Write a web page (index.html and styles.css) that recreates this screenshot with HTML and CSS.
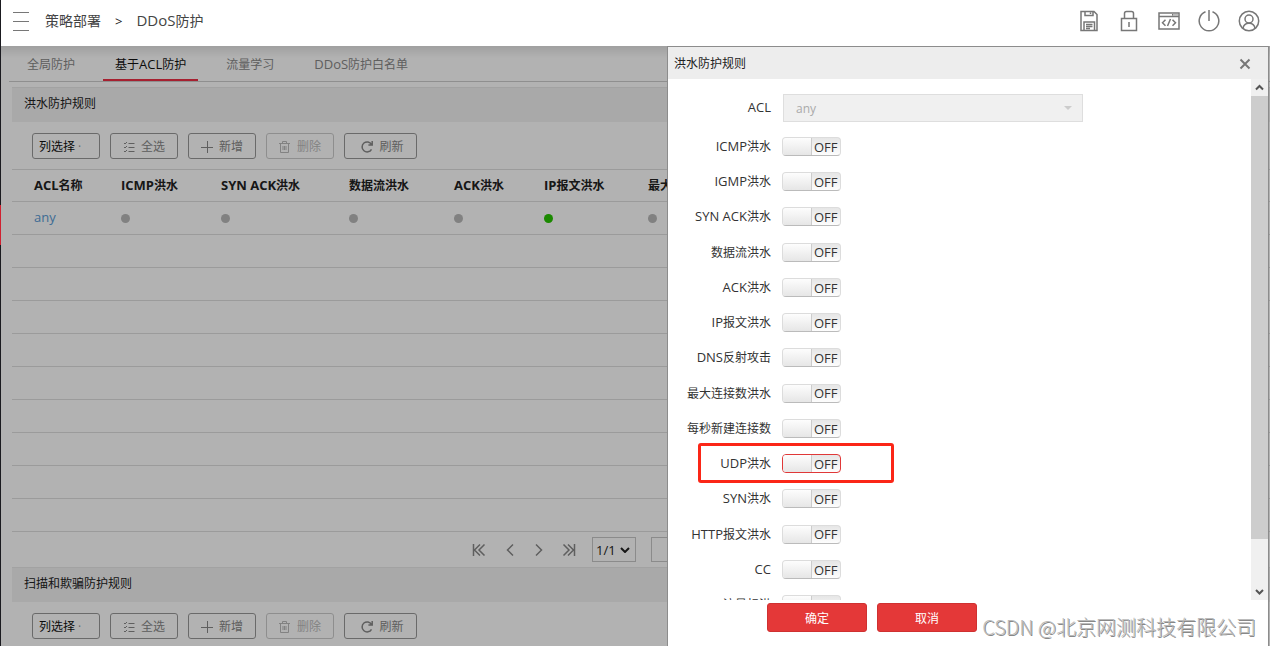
FILE: index.html
```html
<!DOCTYPE html>
<html lang="zh-CN">
<head>
<meta charset="utf-8">
<title>DDoS防护</title>
<link rel="stylesheet" href="styles.css">
</head>
<body>
<svg class="sprite" aria-hidden="true">
  <symbol id="i-list" viewBox="0 0 12 12"><path d="M1 2l1 1 2-2M1 6l1 1 2-2M1 10l1 1 2-2M5.500 2.500h6M5.500 6.500h6M5.500 10.500h6"/></symbol>
  <symbol id="i-plus" viewBox="0 0 12 12"><path d="M6.500 0v12M0 6.500h12"/></symbol>
  <symbol id="i-trash" viewBox="0 0 12 12"><path d="M0 2.500h11M3.500 2.500v-2h4v2M1.500 2.500v9h8v-9M4 5v4M5.500 5v4M7 5v4"/></symbol>
  <symbol id="i-refresh" viewBox="0 0 12 12"><path d="M10.500 8.300A5 5 0 1 1 10.500 3.500M11.200 0v4H7.400" stroke-width="1.500"/></symbol>
</svg>
<div class="app">
  <aside class="rail"><span class="rail-active"></span></aside>
  <div class="page">
    <header class="topbar">
      <button class="menu" aria-label="菜单"><span></span><span></span><span></span></button>
      <nav class="crumbs"><a href="#">策略部署</a><span class="sep">&gt;</span><a href="#"><span class="lat">DDoS</span>防护</a></nav>
      <div class="tools">
        <button aria-label="保存"><svg width="20" height="22" viewBox="0 0 20 22"><path d="M2 1.500h13l3 3v16H2zM6 1.500v4h8v-4M11.500 2.500v1.500M5 20v-8h10.500v8M7 14.500h6.500M7 16.500h6.500M7 18.500h4"/></svg></button>
        <button aria-label="锁定"><svg width="20" height="22" viewBox="0 0 20 22"><path d="M2.500 8.500h15v12h-15zM5.500 8.500v-5q0-2 2-2h5q2 0 2 2v5M10 12v5"/></svg></button>
        <button aria-label="代码"><svg width="22" height="20" viewBox="0 0 22 20"><path d="M1 2h20v16H1zM1 5.500h20M14 3.800h1.500M16.500 3.800h1M18.500 3.800h1M7.500 8.800l-3 3 3 3M14.500 8.800l3 3-3 3M12.500 8l-3 7"/></svg></button>
        <button aria-label="退出"><svg width="22" height="22" viewBox="0 0 22 22"><path d="M7.500 1.800a9.800 9.800 0 1 0 7 0M11 0v11"/></svg></button>
        <button aria-label="用户"><svg width="22" height="22" viewBox="0 0 22 22"><circle cx="11" cy="11" r="9.700"/><circle cx="11" cy="9" r="4"/><path d="M5 18.500c1-7 11-7 12 0"/></svg></button>
      </div>
    </header>
    <div class="workspace">
      <main class="content">
        <nav class="tabs"><a href="#">全局防护</a><a href="#" class="active">基于<span class="lat">ACL</span>防护</a><a href="#">流量学习</a><a href="#"><span class="lat">DDoS</span>防护白名单</a></nav>
        <section class="panel">
          <h2>洪水防护规则</h2>
          <div class="toolbar">
            <button class="pick">列选择 <i>·</i></button>
            <button><svg><use href="#i-list"/></svg>全选</button>
            <button><svg><use href="#i-plus"/></svg>新增</button>
            <button disabled><svg><use href="#i-trash"/></svg>删除</button>
            <button class="wide"><svg><use href="#i-refresh"/></svg>刷新</button>
          </div>
          <table>
            <colgroup><col class="c1"><col class="c2"><col class="c3"><col class="c4"><col class="c5"><col class="c6"><col></colgroup>
            <thead><tr><th><span class="lat">ACL</span>名称</th><th><span class="lat">ICMP</span>洪水</th><th><span class="lat">SYN ACK</span>洪水</th><th>数据流洪水</th><th><span class="lat">ACK</span>洪水</th><th><span class="lat">IP</span>报文洪水</th><th>最大连接数洪水</th></tr></thead>
            <tbody>
              <tr><td><a href="#" class="lat">any</a></td><td><span class="dot"></span></td><td><span class="dot"></span></td><td><span class="dot"></span></td><td><span class="dot"></span></td><td><span class="dot on"></span></td><td><span class="dot"></span></td></tr>
              <tr><td colspan="7"></td></tr><tr><td colspan="7"></td></tr><tr><td colspan="7"></td></tr>
              <tr><td colspan="7"></td></tr><tr><td colspan="7"></td></tr><tr><td colspan="7"></td></tr>
              <tr><td colspan="7"></td></tr><tr><td colspan="7"></td></tr><tr><td colspan="7"></td></tr>
            </tbody>
          </table>
          <div class="pager">
            <button aria-label="首页"><svg width="14" height="12" viewBox="0 0 14 12"><path d="M1.500 0v12M8 .5L2.500 6 8 11.500M12.500 .5L7 6l5.500 5.500"/></svg></button>
            <button aria-label="上一页"><svg width="14" height="12" viewBox="0 0 14 12"><path d="M11 .5L5.500 6l5.500 5.500"/></svg></button>
            <button aria-label="下一页"><svg width="14" height="12" viewBox="0 0 14 12"><path d="M4 .5L9.500 6 4 11.500"/></svg></button>
            <button aria-label="末页"><svg width="14" height="12" viewBox="0 0 14 12"><path d="M12.500 0v12M6 .5L11.500 6 6 11.500M1.500 .5L7 6l-5.500 5.500"/></svg></button>
            <div class="page-select"><select aria-label="页码"><option>1/1</option></select><svg width="10" height="6" viewBox="0 0 10 6"><path d="M1 1l4 4 4-4"/></svg></div>
            <input class="page-input" aria-label="跳转页" value="1">
          </div>
        </section>
        <section class="panel">
          <h2>扫描和欺骗防护规则</h2>
          <div class="toolbar">
            <button class="pick">列选择 <i>·</i></button>
            <button><svg><use href="#i-list"/></svg>全选</button>
            <button><svg><use href="#i-plus"/></svg>新增</button>
            <button disabled><svg><use href="#i-trash"/></svg>删除</button>
            <button class="wide"><svg><use href="#i-refresh"/></svg>刷新</button>
          </div>
        </section>
      </main>
      <div class="overlay"></div>
      <div class="drawer" role="dialog" aria-labelledby="drawer-title">
        <div class="drawer-head"><h2 id="drawer-title">洪水防护规则</h2><button aria-label="关闭"><svg width="12" height="12" viewBox="0 0 12 12"><path d="M1.500 1.500l9 9M10.500 1.500l-9 9"/></svg></button></div>
        <div class="drawer-body">
          <form class="rules">
            <div class="row"><label for="acl"><span class="lat">ACL</span></label><div class="acl"><select id="acl" disabled><option>any</option></select><span class="caret"></span></div></div>
            <div class="row"><label for="t1"><span class="lat">ICMP</span>洪水</label><span class="toggle"><input type="checkbox" id="t1"><span class="lat">OFF</span></span></div>
            <div class="row"><label for="t2"><span class="lat">IGMP</span>洪水</label><span class="toggle"><input type="checkbox" id="t2"><span class="lat">OFF</span></span></div>
            <div class="row"><label for="t3"><span class="lat">SYN ACK</span>洪水</label><span class="toggle"><input type="checkbox" id="t3"><span class="lat">OFF</span></span></div>
            <div class="row"><label for="t4">数据流洪水</label><span class="toggle"><input type="checkbox" id="t4"><span class="lat">OFF</span></span></div>
            <div class="row"><label for="t5"><span class="lat">ACK</span>洪水</label><span class="toggle"><input type="checkbox" id="t5"><span class="lat">OFF</span></span></div>
            <div class="row"><label for="t6"><span class="lat">IP</span>报文洪水</label><span class="toggle"><input type="checkbox" id="t6"><span class="lat">OFF</span></span></div>
            <div class="row"><label for="t7"><span class="lat">DNS</span>反射攻击</label><span class="toggle"><input type="checkbox" id="t7"><span class="lat">OFF</span></span></div>
            <div class="row"><label for="t8">最大连接数洪水</label><span class="toggle"><input type="checkbox" id="t8"><span class="lat">OFF</span></span></div>
            <div class="row"><label for="t9">每秒新建连接数</label><span class="toggle"><input type="checkbox" id="t9"><span class="lat">OFF</span></span></div>
            <div class="row marked"><label for="t10"><span class="lat">UDP</span>洪水</label><span class="toggle focus"><input type="checkbox" id="t10"><span class="lat">OFF</span></span></div>
            <div class="row"><label for="t11"><span class="lat">SYN</span>洪水</label><span class="toggle"><input type="checkbox" id="t11"><span class="lat">OFF</span></span></div>
            <div class="row"><label for="t12"><span class="lat">HTTP</span>报文洪水</label><span class="toggle"><input type="checkbox" id="t12"><span class="lat">OFF</span></span></div>
            <div class="row"><label for="t13"><span class="lat">CC</span></label><span class="toggle"><input type="checkbox" id="t13"><span class="lat">OFF</span></span></div>
            <div class="row"><label for="t14">流量标洪</label><span class="toggle"><input type="checkbox" id="t14"><span class="lat">OFF</span></span></div>
          </form>
          <div class="scrollbar"><svg width="17" height="17" viewBox="0 0 17 17"><path d="M5 10.500L8.500 7l3.500 3.500"/></svg><span class="thumb"></span><svg width="17" height="17" viewBox="0 0 17 17"><path d="M5 7l3.500 3.500L12 7"/></svg></div>
        </div>
        <div class="drawer-foot"><button>确定</button><button>取消</button></div>
      </div>
    </div>
  </div>
  <div class="watermark">CSDN @北京网测科技有限公司</div>
</div>
</body>
</html>
```
FILE: styles.css
```css
*, ::before, ::after { box-sizing: border-box; }
body { margin: 0; font: 12px/16px "Open Sans", "Noto Sans CJK SC", sans-serif; color: #333; background: #fff; }
button, input, select { font: inherit; color: inherit; margin: 0; padding: 0; border: 0; background: none; }
a { color: inherit; text-decoration: none; }
h2 { margin: 0; font-size: 12px; font-weight: 400; }
svg { display: block; fill: none; stroke: currentColor; flex: none; }
.sprite { position: absolute; width: 0; height: 0; }
.lat { font-size: 13px; line-height: 1; }

.app { position: relative; display: flex; height: 100vh; overflow: hidden; }
.rail { width: 1px; flex: none; background: #1a1a1f; padding-top: 205px; }
.rail-active { display: block; height: 40px; background: #d02030; }
.page { flex: 1; min-width: 0; display: flex; flex-direction: column; }

.topbar { display: flex; align-items: center; height: 46px; flex: none; padding: 0 10px 4px 12px; }
.menu { width: 16px; display: grid; gap: 8px; }
.menu span { height: 1px; background: #777; }
.crumbs { display: flex; align-items: center; margin-left: 16px; font-size: 14px; line-height: 20px; color: #444; }
.crumbs .lat { font-size: 15px; }
.crumbs .sep { margin: 0 14px; color: #222; font-size: 13px; }
.tools { margin-left: auto; display: flex; gap: 18px; color: #777; }
.tools button { width: 22px; height: 22px; display: grid; place-items: center; }
.tools svg { stroke-width: 1.500; }

.workspace { position: relative; flex: 1; min-height: 0; overflow: hidden; }
.tabs { display: flex; gap: 16px; height: 36px; margin-left: 8px; padding-left: 6px; border-bottom: 1px solid #cdcdcd; color: #888; }
.tabs a { height: 35px; padding: 11px 12px 0; white-space: nowrap; }
.tabs .active { color: #111; border-bottom: 2px solid #ee2f45; }
.content { height: 100%; overflow: hidden; }
.panel { margin-left: 11px; }
.tabs + .panel { margin-top: 5px; }
.panel h2 { height: 35px; padding: 8px 12px; background: #f2f2f2; border-top: 1px solid #e8e8e8; color: #222; }
.toolbar { display: flex; gap: 10px; padding: 11px 20px 10px; }
.toolbar button { width: 68px; height: 26px; display: flex; align-items: center; justify-content: center; gap: 6px; padding-top: 2px; border: 1px solid #999; border-radius: 3px; color: #888; }
.toolbar svg { width: 12px; height: 12px; }
.toolbar .pick { justify-content: flex-start; padding-left: 6px; gap: 3px; color: #111; }
.toolbar .pick i { font-style: normal; color: #999; }
.toolbar .wide { width: 73px; padding-left: 4px; }
.toolbar button:disabled { color: #bbb; border-color: #ccc; }
table { width: 100%; table-layout: fixed; border-collapse: collapse; border-top: 1px solid #dedede; }
.c1 { width: 87px; } .c2 { width: 100px; } .c3 { width: 128px; } .c4 { width: 105px; } .c5 { width: 90px; } .c6 { width: 104px; }
th, td { height: 33px; padding: 0 0 0 22px; text-align: left; border-bottom: 1px solid #dedede; white-space: nowrap; }
th { height: 32px; padding-top: 1px; font-weight: 700; color: #222; }
td a { color: #5a9bd5; }
.dot { display: block; width: 9px; height: 9px; border-radius: 50%; background: #b9b9b9; }
.dot.on { background: #27c400; }
.pager { display: flex; align-items: center; height: 35px; padding-left: 460px; gap: 15px; color: #888; }
.pager button { width: 15px; }
.pager svg { stroke-width: 1.500; }
.page-select { position: relative; width: 44px; height: 25px; border: 1px solid #c8c8c8; color: #222; font-size: 13px; }
.page-select select { width: 100%; height: 100%; padding-left: 3px; appearance: none; }
.page-select svg { position: absolute; right: 5px; top: 9px; stroke-width: 2; pointer-events: none; }
.page-input { width: 44px; height: 25px; padding-left: 15px; border: 1px solid #c8c8c8; }
.overlay { position: absolute; inset: 0; background: linear-gradient(rgba(0,0,0,.1), transparent 12px), rgba(0,0,0,.3); }

.drawer { position: absolute; top: 0; bottom: 0; right: 1px; width: 602px; max-width: 100%; display: flex; flex-direction: column; background: #fff; border: 1px solid #8c8c8c; border-bottom: 0; }
.drawer-head { display: flex; align-items: center; justify-content: space-between; height: 32px; flex: none; padding: 2px 17px 0 6px; background: #ededed; color: #222; }
.drawer-head button { color: #777; }
.drawer-head svg { stroke-width: 2; }
.drawer-body { flex: 1; min-height: 0; display: flex; }
.rules { flex: 1; min-height: 0; padding-top: 7px; display: grid; grid-template-rows: 43px repeat(4, 35px 35px 35px 36px); overflow: hidden; }
.row { position: relative; display: flex; align-items: center; gap: 11px; }
.row label { width: 103px; padding-top: 1px; text-align: right; white-space: nowrap; }
.acl { position: relative; width: 300px; margin-left: 1px; }
.acl select { display: block; width: 100%; height: 28px; padding: 2px 12px 0; font-size: 12px; appearance: none; background: #f0f0f0; border: 1px solid #dedede; color: #aaa; opacity: 1; }
.caret { position: absolute; right: 11px; top: 12px; border: 4px solid transparent; border-top-color: #ccc; border-bottom: 0; }
.toggle { display: flex; align-items: center; width: 59px; height: 19px; overflow: hidden; border: 1px solid #dcdcdc; border-bottom-color: #bbb; border-radius: 4px; background: linear-gradient(#e6e6e6, #fdfdfd); }
.toggle input { width: 29px; height: 17px; appearance: none; border-right: 1px solid #ccc; background: linear-gradient(#fdfdfd, #e6e6e6); }
.toggle span { padding: 1px 0 0 2px; }
.toggle.focus { border-color: #e03838; }
.marked::after { content: ""; position: absolute; left: 30px; top: 50%; width: 196px; height: 40px; margin-top: -21px; border: 3px solid #fb2617; border-radius: 3px; pointer-events: none; }
.scrollbar { width: 17px; display: flex; flex-direction: column; background: #f0f0f0; color: #555; }
.scrollbar svg { stroke-width: 2; }
.thumb { flex: 0 1 85%; background: #cdcdcd; margin-bottom: auto; }
.drawer-foot { display: flex; gap: 10px; height: 46px; flex: none; padding: 3px 0 14px 99px; }
.drawer-foot button { width: 100px; height: 29px; padding-top: 2px; border: 1px solid #cf3131; border-radius: 3px; background: #e43838; color: #fff; }
.watermark { position: absolute; right: 14px; bottom: 4px; font-size: 20px; line-height: 30px; font-family: "Noto Sans CJK SC", sans-serif; font-weight: 300; color: #bbb; text-shadow: 1px 1px 0 #888; pointer-events: none; }
```
